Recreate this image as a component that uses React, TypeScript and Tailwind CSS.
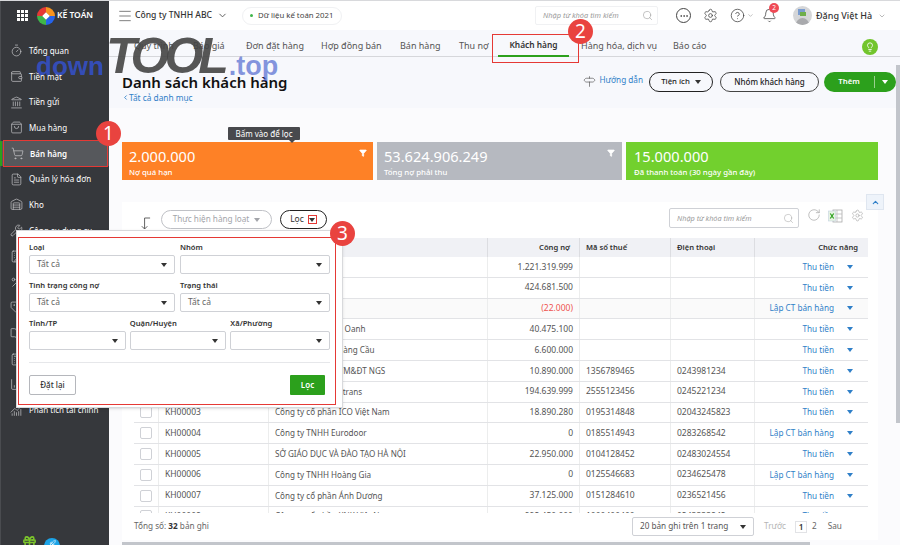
import { Bell, ChevronDown, ChevronLeft, ChevronUp, CircleHelp, Ellipsis, FileText, Funnel, Landmark, Lightbulb, Menu, RotateCw, Search, Settings, ShoppingBag, ShoppingCart, Signpost, Timer, Warehouse, Wrench, Building, Percent, Tag, BookOpen, Calculator, ChartColumn, ChartNoAxesCombined, Gift, Rocket, Wallet } from "lucide-react";

const menu = [
  { label: "Tổng quan", icon: Timer },
  { label: "Tiền mặt", icon: Wallet },
  { label: "Tiền gửi", icon: Landmark },
  { label: "Mua hàng", icon: ShoppingBag },
  { label: "Bán hàng", icon: ShoppingCart, active: true },
  { label: "Quản lý hóa đơn", icon: FileText },
  { label: "Kho", icon: Warehouse },
  { label: "Công cụ dụng cụ", icon: Wrench },
  { label: "Tài sản cố định", icon: Building },
  { label: "Thuế", icon: Percent },
  { label: "Giá thành", icon: Tag },
  { label: "Tổng hợp", icon: BookOpen },
  { label: "Ngân sách", icon: Calculator },
  { label: "Báo cáo", icon: ChartColumn },
  { label: "Phân tích tài chính", icon: ChartNoAxesCombined },
];

const tabs = [
  { label: "Quy trình", w: "w-[59px]" },
  { label: "Báo giá", w: "w-[53px]" },
  { label: "Đơn đặt hàng", w: "w-[75px]" },
  { label: "Hợp đồng bán", w: "w-[79px]" },
  { label: "Bán hàng", w: "w-[59px]" },
  { label: "Thu nợ", w: "w-[51px]" },
  { label: "Khách hàng", w: "w-[71px]", active: true },
  { label: "Hàng hóa, dịch vụ", w: "w-[92px]" },
  { label: "Báo cáo", w: "w-[50px]" },
];

const rows = [
  ["KH00014", "Khách lẻ", "1.221.319.999", "", "", "Thu tiền"],
  ["KH00013", "Công ty An Phát", "424.681.500", "", "", "Thu tiền"],
  ["KH00012", "Công ty Thái Bình", "(22.000)", "", "", "Lập CT bán hàng"],
  ["KH00011", "Công ty TNHH Mỹ Oanh", "40.475.100", "", "", "Thu tiền"],
  ["KH00010", "Công ty CP TM Hoàng Cầu", "6.600.000", "", "", "Thu tiền"],
  ["KH00001", "Công ty cổ phần TM&ĐT NGS", "10.890.000", "1356789465", "0243981234", "Thu tiền"],
  ["KH00002", "Công ty TNHH Voltrans", "194.639.999", "2555123456", "0245221234", "Thu tiền"],
  ["KH00003", "Công ty cổ phần ICO Việt Nam", "18.890.280", "0195314848", "02043245823", "Thu tiền"],
  ["KH00004", "Công ty TNHH Eurodoor", "0", "0185514943", "0283268542", "Lập CT bán hàng"],
  ["KH00005", "SỞ GIÁO DỤC VÀ ĐÀO TẠO HÀ NỘI", "22.950.000", "0104128452", "02483024554", "Thu tiền"],
  ["KH00006", "Công ty TNHH Hoàng Gia", "0", "0125546683", "0234625478", "Lập CT bán hàng"],
  ["KH00007", "Công ty cổ phần Ánh Dương", "37.125.000", "0151284610", "0236521456", "Thu tiền"],
  ["KH00008", "Công ty cổ phần XNK Việt Nam", "992.450.000", "1000400400", "0243333842", "Thu tiền"],
];

const Caret = ({ className = "border-t-[#333]" }: { className?: string }) => (
  <span className={`inline-block w-0 h-0 border-x-[3px] border-x-transparent border-t-[4px] ${className}`} />
);

const Badge = ({ n, className }: { n: string; className: string }) => (
  <div className={`absolute w-[25px] h-[25px] rounded-full bg-[#e9433f] text-white text-[19px] leading-[25px] text-center ${className}`}>{n}</div>
);

const Field = ({ label, value, className }: { label: string; value?: string; className: string }) => (
  <div className={className}>
    <div className="text-[7.6px] leading-[12px] font-semibold text-[#333] h-[14px]">{label}</div>
    <div className="h-[19px] border border-[#cfd1d6] rounded-[2px] flex items-center justify-between pl-[7px] pr-[7px] text-[8.5px] text-[#666]">
      <span>{value}</span>
      <Caret />
    </div>
  </div>
);

const Sidebar = () => (
  <aside className="w-[109px] shrink-0 bg-[#36383c] relative border-l-[1px] border-[#4a4c50]">
    <div className="h-[29px] flex items-center pl-[16px]">
      <div className="grid grid-cols-3 gap-[1.5px] w-[11px]">
        {Array.from({ length: 9 }).map((_, i) => <span key={i} className="w-[2.5px] h-[2.5px] bg-white" />)}
      </div>
      <svg viewBox="0 0 20 20" className="w-[18px] h-[18px] ml-[9px]">
        <path d="M10 0A10 10 0 0 1 20 10H14L10 6Z" fill="#f7931e" />
        <path d="M20 10A10 10 0 0 1 10 20V14L14 10Z" fill="#2563eb" />
        <path d="M10 20A10 10 0 0 1 0 10H6L10 14Z" fill="#3fb54a" />
        <path d="M0 10A10 10 0 0 1 10 0V6L6 10Z" fill="#e53935" />
        <rect x="7" y="7" width="6" height="6" fill="#fff" transform="rotate(45 10 10)" />
      </svg>
      <span className="ml-[2px] text-[8.5px] font-semibold text-white">KẾ TOÁN</span>
    </div>
    <nav className="pt-[8px]">
      {menu.map((m) => (
        <div key={m.label} className={`h-[25.7px] flex items-center pl-[9px] text-[8px] text-white ${m.active ? "bg-[#56585c] font-semibold border-l-[2px] border-[#2ca01c] -ml-px pl-[8px]" : ""}`}>
          <m.icon className="w-[13px] h-[13px] mr-[6px] text-[#c9cacc]" strokeWidth={1.25} />
          <span>{m.label}</span>
        </div>
      ))}
    </nav>
    <Gift className="absolute left-[21px] top-[534px] w-[15px] h-[15px] text-[#7cc52c]" strokeWidth={2.5} />
    <div className="absolute left-[43px] top-[537px] w-[16px] h-[16px] rounded-full bg-[#1ca4e8] flex justify-center pt-[2px]">
      <Rocket className="w-[7px] h-[7px] text-white" />
    </div>
  </aside>
);

const Header = () => (
  <header className="h-[29px] bg-white flex items-center text-[#333]">
    <Menu className="ml-[8px] w-[16px] h-[16px] text-[#666]" strokeWidth={1.25} />
    <span className="ml-[2px] text-[8.6px] font-medium whitespace-nowrap">Công ty TNHH ABC</span>
    <ChevronDown className="ml-[5px] w-[11px] h-[11px] text-[#555]" />
    <div className="ml-[14px] h-[18px] w-[100px] border border-[#f0f1f3] rounded-full flex items-center pl-[7px] text-[7.8px] text-[#444] whitespace-nowrap">
      <span className="w-[3px] h-[3px] bg-[#3fb54a] rounded-full mr-[5px]" />
      Dữ liệu kế toán 2021
    </div>
    <div className="ml-[193px] h-[19px] w-[123px] border border-[#f0f1f3] rounded-[2px] flex items-center justify-between pl-[7px] pr-[4px] text-[7.4px] italic text-[#9a9a9a]">
      Nhập từ khóa tìm kiếm
      <Search className="w-[11px] h-[11px] text-[#999]" strokeWidth={1.25} />
    </div>
    <div className="ml-[18px] w-[15px] h-[15px] rounded-full border border-[#444] flex items-center justify-center">
      <Ellipsis className="w-[10px] h-[10px] text-[#444]" />
    </div>
    <Settings className="ml-[12px] w-[15px] h-[15px] text-[#444]" strokeWidth={1.25} />
    <CircleHelp className="ml-[12px] w-[15px] h-[15px] text-[#444]" strokeWidth={1.25} />
    <ChevronDown className="w-[7px] h-[7px] ml-[2px] text-[#999]" />
    <div className="relative ml-[8px]">
      <Bell className="w-[15px] h-[15px] text-[#444]" strokeWidth={1.25} />
      <span className="absolute -top-[5px] left-[7px] w-[10px] h-[10px] rounded-full bg-[#ef4a55] text-white text-[6.5px] leading-[10px] text-center">2</span>
    </div>
    <div className="ml-[16px] w-[19px] h-[19px] rounded-full bg-[#d5d6d8] overflow-hidden relative">
      <span className="absolute left-[5px] top-[3px] w-[7px] h-[6px] bg-[#7a9ccf]" />
      <span className="absolute left-[7px] top-[6px] w-[6px] h-[4px] bg-[#6fae4a]" />
      <span className="absolute left-[3px] top-[12px] w-[13px] h-[8px] rounded-t-full bg-[#a9aaad]" />
    </div>
    <span className="ml-[4px] text-[9px] font-medium whitespace-nowrap">Đặng Việt Hà</span>
    <ChevronDown className="ml-[6px] w-[8px] h-[8px] text-[#999]" />
  </header>
);

const Tabs = () => (
  <div className="h-[27px] bg-[#f7f8fc] border-b border-[#d6d7db] flex items-center pl-[13px] pt-[5px] relative text-[9px] text-[#555]">
    {tabs.map((t) => (
      <div key={t.label} className={`${t.w} shrink-0 h-full flex items-center ${t.active ? "justify-center font-semibold text-[8.4px] text-[#333] relative" : "pl-[12px]"}`}>
        <span className="whitespace-nowrap">{t.label}</span>
        {t.active && <span className="absolute left-0 right-0 bottom-[-1px] h-[2px] bg-[#2ca01c]" />}
      </div>
    ))}
    <div className="absolute right-[22px] top-[9px] w-[16px] h-[16px] rounded-full bg-[#72c52c] flex items-center justify-center">
      <Lightbulb className="w-[10px] h-[10px] text-white" />
    </div>
  </div>
);

const TitleBar = () => (
  <div className="h-[51px] bg-[#f7f8fc] pl-[13px] pr-[4px] flex justify-between">
    <div className="pt-[15px]">
      <h1 className="text-[15px] leading-[20px] font-semibold text-[#111]">Danh sách khách hàng</h1>
      <div className="flex items-center text-[8.3px] leading-[11px] text-[#2f7fc8]">
        <ChevronLeft className="w-[7px] h-[9px]" strokeWidth={3} />
        Tất cả danh mục
      </div>
    </div>
    <div className="flex items-start pt-[15px]">
      <Signpost className="w-[13px] h-[13px] mt-[3px] text-[#555]" strokeWidth={1.25} />
      <span className="ml-[3px] text-[8.2px] text-[#2f7fc8] mt-[2px]">Hướng dẫn</span>
      <div className="ml-[6px] w-[64px] h-[20px] border-[1.5px] border-[#222] rounded-full flex items-center justify-center gap-[5px] text-[7.8px] font-medium text-[#222]">
        Tiện ích <Caret />
      </div>
      <div className="ml-[7px] w-[99px] h-[20px] border border-[#444] rounded-full flex items-center justify-center text-[8px] font-medium text-[#222]">
        Nhóm khách hàng
      </div>
      <div className="ml-[5px] w-[72px] h-[20px] bg-[#2ca01c] rounded-full flex items-center text-[7.8px] font-semibold text-white">
        <span className="w-[50px] text-center">Thêm</span>
        <span className="h-[12px] border-l border-[#9ad08f]" />
        <span className="ml-[7px] flex"><Caret className="border-t-white" /></span>
      </div>
    </div>
  </div>
);

const Cards = () => (
  <div className="ml-[13px] mr-[22px] mt-[34px] h-[38px] flex gap-[4px] relative text-white">
    <div className="w-[251px] bg-[#fe8126] pl-[7px] relative">
      <div className="text-[14.6px] leading-[20px] pt-[4px]">2.000.000</div>
      <div className="text-[7.8px] leading-[10px] mt-[1px] font-medium">Nợ quá hạn</div>
      <Funnel className="absolute right-[6px] top-[7px] w-[8px] h-[8px] fill-white" />
    </div>
    <div className="w-[245px] bg-[#b6b9c0] pl-[7px] relative">
      <div className="text-[14.6px] leading-[20px] pt-[4px]">53.624.906.249</div>
      <div className="text-[7.8px] leading-[10px] mt-[1px] font-medium">Tổng nợ phải thu</div>
      <Funnel className="absolute right-[7px] top-[7px] w-[8px] h-[8px] fill-white" />
    </div>
    <div className="flex-1 bg-[#72d02e] pl-[8px]">
      <div className="text-[14.6px] leading-[20px] pt-[4px]">15.000.000</div>
      <div className="text-[7.8px] leading-[10px] mt-[1px] font-medium">Đã thanh toán (30 ngày gần đây)</div>
    </div>
    <div className="absolute left-[106px] -top-[15px] w-[72px] h-[13px] bg-[#48494d] rounded-[1px] text-[8px] leading-[13px] text-center">
      Bấm vào để lọc
      <span className="absolute left-[61px] top-[13px] w-0 h-0 border-x-[3px] border-x-transparent border-t-[3px] border-t-[#48494d]" />
    </div>
  </div>
);

const Row = ({ r, i }: { r: string[]; i: number }) => (
  <div className={`grid grid-cols-[24px_110px_219px_92px_91px_84px_114px] h-[20.8px] shrink-0 border-b border-[#e2e3e6] text-[8.5px] text-[#555] ${i === 2 ? "bg-[#fafafa]" : ""}`}>
    <div className="flex items-center justify-center">
      <span className="w-[12px] h-[12px] border border-[#cfd1d6] rounded-[2px] bg-white" />
    </div>
    <div className="border-l border-[#eceded] flex items-center pl-[6px]">{r[0]}</div>
    <div className="border-l border-[#eceded] flex items-center pl-[6px] whitespace-nowrap text-[8.1px]">{r[1]}</div>
    <div className={`border-l border-[#eceded] flex items-center justify-end pr-[6px] ${r[2].startsWith("(") ? "text-[#ef5350]" : ""}`}>{r[2]}</div>
    <div className="border-l border-[#eceded] flex items-center pl-[6px]">{r[3]}</div>
    <div className="border-l border-[#eceded] flex items-center pl-[6px]">{r[4]}</div>
    <div className="border-l border-[#eceded] flex items-center justify-end pr-[15px] text-[#2f7fc8] gap-[13px] text-[8.2px]">
      {r[5]}
      <Caret className="border-t-[#2f7fc8]" />
    </div>
  </div>
);

const TablePanel = () => (
  <section className="ml-[13px] mr-[22px] mt-[22px] h-[338px] bg-white relative">
    <div className="h-[36px] relative flex items-start pl-[39px]">
      <svg viewBox="0 0 12 14" className="absolute left-[18px] top-[15px] w-[11px] h-[13px] fill-none stroke-[#555] stroke-1">
        <path d="M5 1V13M2 10L5 13L8 10M5 1H11" />
      </svg>
      <div className="mt-[8px] w-[111px] h-[19px] border border-[#bfc1c6] rounded-full flex items-center justify-center gap-[5px] text-[8.2px] text-[#a3a5aa]">
        Thực hiện hàng loạt <Caret className="border-t-[#a3a5aa]" />
      </div>
      <div className="ml-[8px] mt-[8px] w-[47px] h-[19px] border-[1.5px] border-[#222] rounded-full flex items-center justify-center gap-[4px] text-[8.5px] text-[#333]">
        Lọc
        <span className="w-[9px] h-[9px] border border-[#e53935] flex items-center justify-center"><Caret /></span>
      </div>
      <div className="absolute left-[547px] top-[6px] w-[130px] h-[20px] border border-[#cfd1d6] rounded-[2px] flex items-center justify-between pl-[7px] pr-[4px] text-[7.3px] italic text-[#9a9a9a]">
        Nhập từ khóa tìm kiếm
        <Search className="w-[11px] h-[11px] text-[#999]" strokeWidth={1} />
      </div>
      <RotateCw className="absolute left-[685px] top-[6px] w-[14px] h-[14px] text-[#aaa]" strokeWidth={1.25} />
      <svg viewBox="0 0 15 14" className="absolute left-[706px] top-[7px] w-[15px] h-[14px]">
        <rect x="5" y="1" width="9" height="12" fill="#fff" stroke="#aaa" strokeWidth="0.8" />
        <path d="M9 1V13M5 5H14M5 9H14" stroke="#bbb" strokeWidth="0.8" />
        <rect x="0.5" y="2" width="7" height="10" fill="#e8f3e4" stroke="#bcd" strokeWidth="0.5" />
        <path d="M2.3 4.5L5.7 9.5M5.7 4.5L2.3 9.5" stroke="#2ca01c" strokeWidth="1.2" />
      </svg>
      <Settings className="absolute left-[729px] top-[7px] w-[13px] h-[13px] text-[#aaa]" strokeWidth={1.25} />
    </div>

    <div className="ml-[12px] w-[734px] h-[275px] overflow-hidden flex flex-col">
      <div className="grid grid-cols-[24px_110px_219px_92px_91px_84px_114px] h-[19px] shrink-0 bg-[#f0f1f5] text-[7.6px] font-semibold text-[#333]">
        <div />
        <div className="border-l border-[#dcdde1]" />
        <div className="border-l border-[#dcdde1]" />
        <div className="border-l border-[#dcdde1] flex items-center justify-end pr-[9px]">Công nợ</div>
        <div className="border-l border-[#dcdde1] flex items-center pl-[6px]">Mã số thuế</div>
        <div className="border-l border-[#dcdde1] flex items-center pl-[6px]">Điện thoại</div>
        <div className="border-l border-[#dcdde1] flex items-center justify-end pr-[10px]">Chức năng</div>
      </div>
      {rows.map((r, i) => <Row key={i} r={r} i={i} />)}
    </div>

    <div className="flex items-center h-[27px] pl-[12px] text-[8.2px] text-[#666]">
      <span className="w-[100px] whitespace-nowrap">Tổng số: <b className="text-[#333]">32</b> bản ghi</span>
      <div className="ml-[398px] w-[122px] h-[19px] border border-[#cfd1d6] rounded-[2px] flex items-center justify-between px-[7px] text-[#555]">
        20 bản ghi trên 1 trang <Caret />
      </div>
      <span className="ml-[10px] text-[#b5b5b5]">Trước</span>
      <span className="ml-[9px] w-[12px] h-[12px] border border-[#e2e3e6] text-center leading-[10px] font-semibold text-[#333]">1</span>
      <span className="ml-[5px]">2</span>
      <span className="ml-[11px]">Sau</span>
    </div>
  </section>
);

const FilterPopup = () => (
  <div className="absolute left-[16px] top-[229px] w-[327px] h-[178px] bg-white border border-[#d8d9dc] shadow-sm">
    <div className="absolute left-[1px] top-[6px] w-[318px] h-[168px] border-[1.5px] border-[#e53935]" />
    <div className="absolute left-[12px] top-[10px] w-[301px] flex flex-col">
      <div className="flex gap-[5px]">
        <Field label="Loại" value="Tất cả" className="w-[146px]" />
        <Field label="Nhóm" className="w-[150px]" />
      </div>
      <div className="flex gap-[5px] mt-[5px]">
        <Field label="Tình trạng công nợ" value="Tất cả" className="w-[146px]" />
        <Field label="Trạng thái" value="Tất cả" className="w-[150px]" />
      </div>
      <div className="flex gap-[4px] mt-[5px]">
        <Field label="Tỉnh/TP" className="w-[97px]" />
        <Field label="Quận/Huyện" className="w-[97px]" />
        <Field label="Xã/Phường" className="w-[100px]" />
      </div>
      <div className="border-t border-[#e6e7ea] mt-[12px]" />
      <div className="flex justify-between mt-[12px]">
        <div className="w-[47px] h-[20px] border border-[#b5b7bc] rounded-[2px] flex items-center justify-center text-[8px] font-medium text-[#333]">Đặt lại</div>
        <div className="w-[35px] h-[20px] mr-[5px] bg-[#2ca01c] rounded-[1px] flex items-center justify-center text-[8px] font-semibold text-white">Lọc</div>
      </div>
    </div>
  </div>
);

export default function App() {
  return (
    <div className="relative w-[900px] h-[545px] overflow-hidden flex bg-[#fbfbfd] border-t border-[#d8d9dc] font-['Noto_Sans',sans-serif]">
      <Sidebar />
      <main className="flex-1 flex flex-col min-w-0">
        <Header />
        <Tabs />
        <TitleBar />
        <Cards />
        <TablePanel />
      </main>

      <FilterPopup />

      {/* callouts drawn on top of the screen */}
      <div className="absolute left-[3px] top-[139px] w-[105px] h-[27px] border-[1.5px] border-[#e53935]" />
      <div className="absolute left-[492px] top-[33px] w-[87px] h-[29px] border-[1.5px] border-[#e53935]" />
      <Badge n="1" className="left-[96px] top-[120px]" />
      <Badge n="2" className="left-[568px] top-[18px]" />
      <Badge n="3" className="left-[330px] top-[220px]" />

      <div className="absolute left-[866px] top-[193px] w-[18px] h-[16px] bg-[#eef3fa] border border-[#dfe6f0] flex items-center justify-center">
        <ChevronUp className="w-[9px] h-[9px] text-[#2f7fc8]" strokeWidth={3} />
      </div>

      {/* page scrollbars */}
      <div className="absolute left-[896px] top-[64px] w-[4px] h-[358px] bg-[#c2c5cb]" />
      <div className="absolute left-[122px] top-[541px] w-[688px] h-[3px] bg-[#c2c5cb]" />

      {/* watermark */}
      <div className="absolute left-[36px] top-[30px] flex items-end h-[50px] font-['Liberation_Sans',sans-serif] font-bold pointer-events-none">
        <span className="text-[26px] leading-[30px] text-[#3450c8]/90">down</span>
        <span className="ml-[2px] mr-[5px] text-[50px] leading-[50px] italic text-[#444]/90 tracking-[-5px]">TOOL</span>
        <span className="text-[27px] leading-[30px] text-[#3450c8]/60">.top</span>
      </div>
    </div>
  );
}
